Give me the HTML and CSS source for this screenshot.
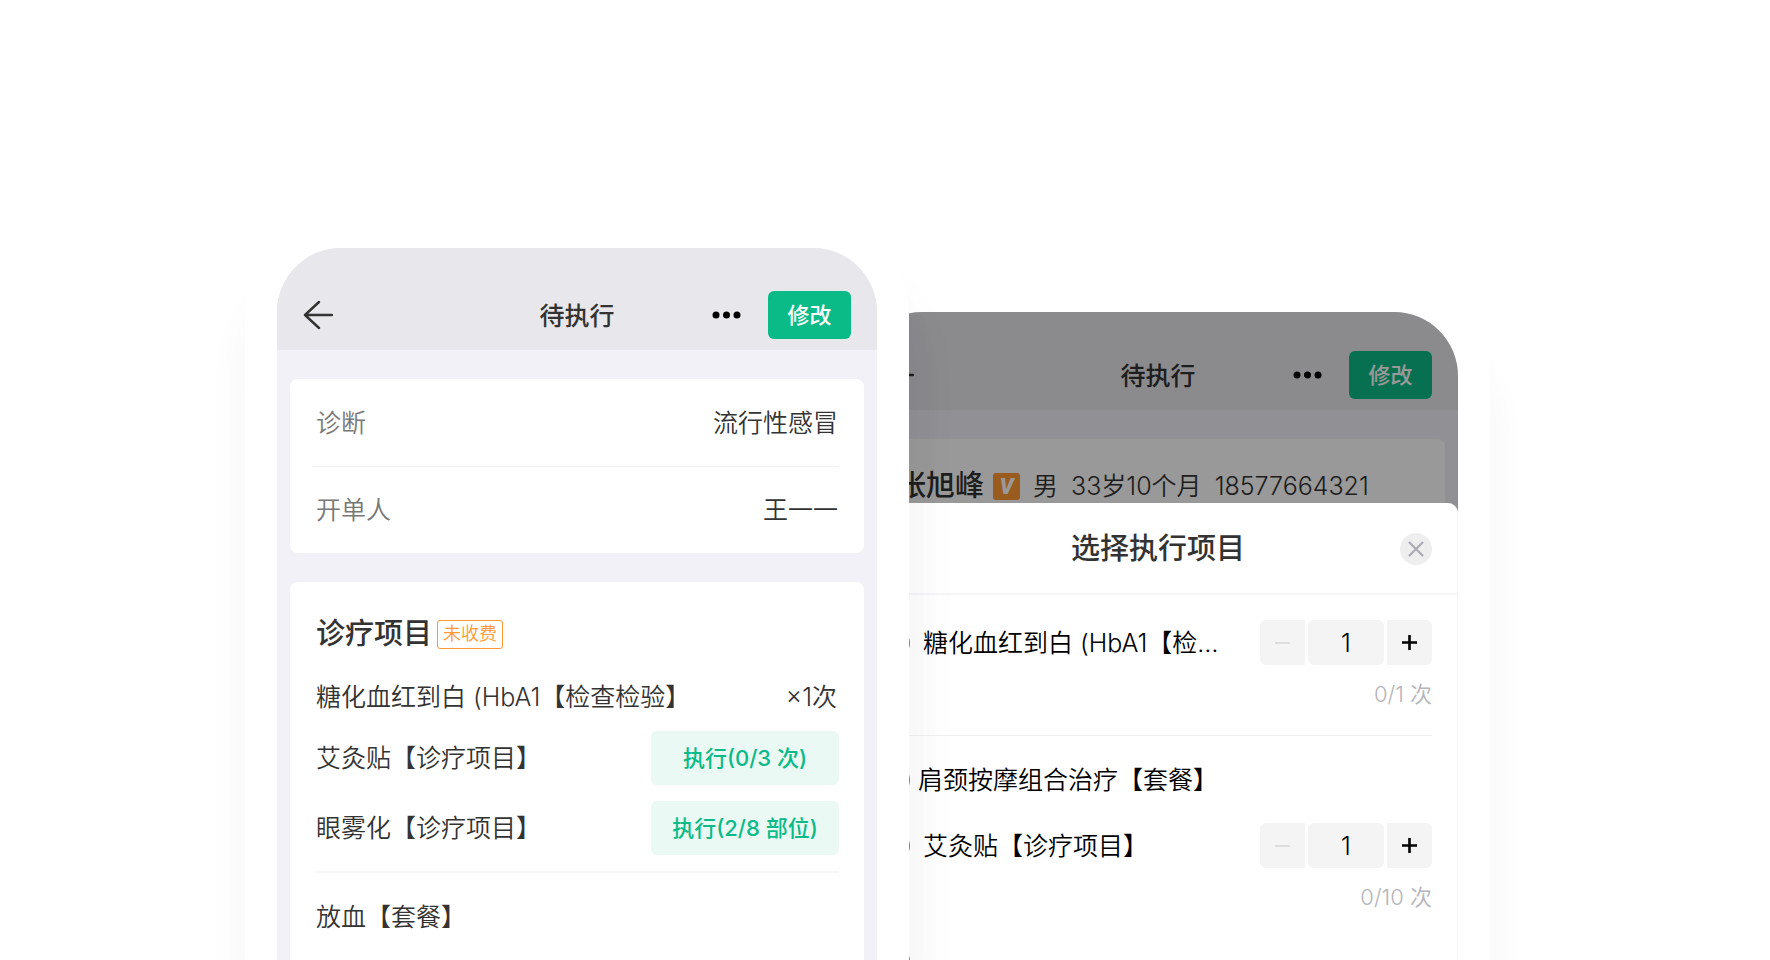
FILE: index.html
```html
<!DOCTYPE html>
<html lang="zh-CN">
<head>
  <meta charset="UTF-8">
  <meta name="viewport" content="width=device-width, initial-scale=1.0">
  <title>待执行</title>
  <link rel="stylesheet" href="styles.css">
</head>
<body>
  <main class="stage">
    <section class="phone phone-front">
      <div class="screen">
        <header class="nav">
          <button class="icon-btn" type="button" aria-label="返回">
            <svg width="30" height="30" viewBox="0 0 30 30" fill="none" stroke="#333" stroke-width="2.400" stroke-linecap="round" stroke-linejoin="round">
              <path d="M16 2 2 15l14 13M2 15h27"/>
            </svg>
          </button>
          <h1 class="nav-title">待执行</h1>
          <div class="nav-actions">
            <button class="icon-btn" type="button" aria-label="更多">
              <svg width="30" height="8" viewBox="0 0 30 8"><circle cx="4" cy="4" r="3.500"/><circle cx="14.500" cy="4" r="3.500"/><circle cx="25" cy="4" r="3.500"/></svg>
            </button>
            <button class="edit-btn" type="button">修改</button>
          </div>
        </header>

        <dl class="card info">
          <div class="info-row">
            <dt>诊断</dt>
            <dd>流行性感冒</dd>
          </div>
          <div class="info-row">
            <dt>开单人</dt>
            <dd>王一一</dd>
          </div>
        </dl>

        <div class="card items">
          <h2 class="items-title">诊疗项目 <span class="tag">未收费</span></h2>
          <div class="item">
            <span>糖化血红到白 (HbA1【检查检验】</span>
            <span class="item-count">×1次</span>
          </div>
          <div class="item">
            <span>艾灸贴【诊疗项目】</span>
            <button class="run-btn" type="button">执行(0/3 次)</button>
          </div>
          <div class="item">
            <span>眼雾化【诊疗项目】</span>
            <button class="run-btn" type="button">执行(2/8 部位)</button>
          </div>
          <div class="item item-package">
            <span>放血【套餐】</span>
          </div>
        </div>
      </div>
    </section>

    <section class="phone phone-back">
      <div class="screen">
        <header class="nav">
          <button class="icon-btn" type="button" aria-label="返回">
            <svg width="30" height="30" viewBox="0 0 30 30" fill="none" stroke="#333" stroke-width="2.400" stroke-linecap="round" stroke-linejoin="round">
              <path d="M16 2 2 15l14 13M2 15h27"/>
            </svg>
          </button>
          <h1 class="nav-title">待执行</h1>
          <div class="nav-actions">
            <button class="icon-btn" type="button" aria-label="更多">
              <svg width="30" height="8" viewBox="0 0 30 8"><circle cx="4" cy="4" r="3.500"/><circle cx="14.500" cy="4" r="3.500"/><circle cx="25" cy="4" r="3.500"/></svg>
            </button>
            <button class="edit-btn" type="button">修改</button>
          </div>
        </header>

        <div class="card patient">
          <strong class="patient-name">张旭峰</strong>
          <span class="vip">V</span>
          <span>男</span>
          <span>33岁10个月</span>
          <span>18577664321</span>
        </div>

        <div class="mask"></div>

        <div class="sheet">
          <div class="sheet-head">
            <h2 class="sheet-title">选择执行项目</h2>
            <button class="close-btn" type="button" aria-label="关闭">
              <svg width="16" height="16" viewBox="0 0 16 16" fill="none" stroke="#a9a9b2" stroke-width="2" stroke-linecap="round">
                <path d="M1.500 1.500l13 13M14.500 1.500l-13 13"/>
              </svg>
            </button>
          </div>

          <div class="pick-group">
            <div class="pick">
              <input type="checkbox" id="pick-hba1" class="check">
              <label for="pick-hba1">糖化血红到白 (HbA1【检…</label>
              <div class="stepper">
                <button type="button" class="minus" aria-label="减少" disabled>
                  <svg width="15" height="15" viewBox="0 0 15 15" stroke="currentColor" stroke-width="2"><path d="M0 8h15"/></svg>
                </button>
                <input type="text" value="1" aria-label="次数">
                <button type="button" class="plus" aria-label="增加">
                  <svg width="15" height="15" viewBox="0 0 15 15" stroke="currentColor" stroke-width="2.600"><path d="M0 7.500h15M7.500 0v15"/></svg>
                </button>
              </div>
            </div>
            <p class="pick-left">0/1 次</p>
          </div>

          <div class="pick-group">
            <div class="pick pick-parent">
              <input type="checkbox" id="pick-package" class="check">
              <label for="pick-package">肩颈按摩组合治疗【套餐】</label>
            </div>
            <div class="pick">
              <input type="checkbox" id="pick-moxa" class="check">
              <label for="pick-moxa">艾灸贴【诊疗项目】</label>
              <div class="stepper">
                <button type="button" class="minus" aria-label="减少" disabled>
                  <svg width="15" height="15" viewBox="0 0 15 15" stroke="currentColor" stroke-width="2"><path d="M0 8h15"/></svg>
                </button>
                <input type="text" value="1" aria-label="次数">
                <button type="button" class="plus" aria-label="增加">
                  <svg width="15" height="15" viewBox="0 0 15 15" stroke="currentColor" stroke-width="2.600"><path d="M0 7.500h15M7.500 0v15"/></svg>
                </button>
              </div>
            </div>
            <p class="pick-left">0/10 次</p>
            <div class="pick">
              <input type="checkbox" class="check" aria-label="选择项目">
            </div>
          </div>
        </div>
      </div>
    </section>
  </main>
</body>
</html>
```

FILE: styles.css
```css
* {
  box-sizing: border-box;
}
body {
  margin: 0;
  background: #fff;
  color: #333;
  font-family: Inter, "Noto Sans CJK SC", sans-serif;
  font-size: 25px;
  font-weight: 350;
  line-height: 36px;
}
h1, h2, p, dl, dd {
  margin: 0;
}
button, input {
  font-family: inherit;
  font-weight: inherit;
  line-height: inherit;
  border: none;
  padding: 0;
  margin: 0;
}
button {
  cursor: pointer;
}
svg {
  display: block;
}

/* two phones side by side, the front one overlaps the back one */
.stage {
  display: flex;
  justify-content: center;
  height: 100vh;
  padding-right: 35px;
  overflow: hidden;
}
.phone {
  flex: 0 0 664px;
  display: flex;
  padding: 32px 32px 0;
  border-radius: 96px 96px 0 0;
  background: #fff;
}
.phone-front {
  position: relative;
  z-index: 1;
  margin-top: 216px;
  box-shadow: 0 60px 24px 18px rgba(0, 0, 0, 0.018), 20px 50px 50px rgba(40, 50, 90, 0.02);
}
.phone-back {
  margin-top: 280px;
  margin-left: -83px;
  box-shadow: 0 60px 24px 18px rgba(0, 0, 0, 0.018);
}
.screen {
  position: relative;
  flex: 1;
  display: flex;
  flex-direction: column;
  min-width: 0;
  overflow: hidden;
  border-radius: 64px 64px 0 0;
  background: #f2f1f7;
}

/* top bar */
.nav {
  display: grid;
  grid-template-columns: 1fr auto 1fr;
  align-items: center;
  padding: 43px 26px 11px;
  background: #e8e7ec;
}
.phone-back .nav {
  padding-top: 39px;
}
.nav-title {
  padding-top: 2px;
  font-size: 25px;
  font-weight: 500;
}
.nav-actions {
  display: flex;
  align-items: center;
  justify-content: flex-end;
  gap: 26px;
}
.icon-btn {
  background: none;
  justify-self: start;
}
.edit-btn {
  width: 83px;
  height: 48px;
  border-radius: 6px;
  background: #0abb87;
  color: #fff;
  font-size: 22px;
  font-weight: 500;
}

.card {
  margin: 29px 13px 0;
  border-radius: 8px;
  background: #fff;
}

/* diagnosis */
.info-row {
  display: flex;
  justify-content: space-between;
  align-items: center;
  height: 87px;
  margin: 0 26px 0 22px;
  padding-left: 4px;
}
.info-row + .info-row {
  border-top: 1px solid #f0f0f2;
}
.info-row dt {
  color: #777;
}

/* treatment items */
.items {
  flex: 1;
  padding: 30px 25px 0 26px;
  border-radius: 8px 8px 0 0;
}
.items-title {
  display: flex;
  align-items: center;
  gap: 5px;
  height: 44px;
  margin-bottom: 23px;
  font-size: 29px;
  font-weight: 500;
}
.tag {
  height: 29px;
  padding: 0 5px;
  border: 1px solid #ff9933;
  border-radius: 3px;
  color: #ff9933;
  font-size: 18px;
  font-weight: 350;
  line-height: 26px;
}
.item {
  display: flex;
  justify-content: space-between;
  align-items: center;
  margin-bottom: 16px;
}
.item-count {
  padding-right: 2px;
}
.run-btn {
  width: 188px;
  height: 54px;
  border-radius: 6px;
  background: #eaf9f4;
  color: #0abb87;
  font-size: 22px;
  font-weight: 500;
}
.item-package {
  padding-top: 26px;
  border-top: 2px solid #f6f6f8;
}

/* patient line */
.patient {
  display: flex;
  align-items: center;
  gap: 13px;
  height: 94px;
  padding: 0 26px;
  white-space: nowrap;
}
.patient-name {
  margin-right: -4px;
  font-size: 29px;
  font-weight: 500;
}
.vip {
  width: 27px;
  height: 27px;
  border-radius: 3px;
  background: #ff9933;
  color: #fff;
  font-family: Roboto, sans-serif;
  font-size: 22px;
  font-style: italic;
  font-weight: 900;
  line-height: 27px;
  text-align: center;
}
.mask {
  position: absolute;
  inset: 0;
  background: rgba(0, 0, 0, 0.4);
}

/* bottom sheet */
.sheet {
  position: absolute;
  inset: 191px 0 0;
  border-right: 1px solid #f5f5f7;
  border-radius: 10px 10px 0 0;
  background: #fff;
  color: #000;
}
.sheet-head {
  display: flex;
  align-items: center;
  height: 92px;
  padding: 2px 25px 0 26px;
  border-bottom: 2px solid #f6f6f8;
}
.sheet-title {
  flex: 1;
  padding-left: 32px;
  color: #333;
  font-size: 29px;
  font-weight: 500;
  text-align: center;
}
.close-btn {
  display: grid;
  place-items: center;
  width: 32px;
  height: 32px;
  border-radius: 50%;
  background: #eee;
}
.pick-group {
  margin: 0 25px 0 26px;
  padding-top: 25px;
}
.pick-group + .pick-group {
  border-top: 1px solid #f0f0f2;
}
.pick {
  display: flex;
  align-items: center;
  gap: 13px;
  min-height: 45px;
}
.pick label {
  flex: 1;
  white-space: nowrap;
}
.pick-parent {
  gap: 8px;
  min-height: 38px;
  margin-bottom: 24px;
}
.check {
  appearance: none;
  flex: none;
  width: 26px;
  height: 26px;
  border: 2px solid #0abb87;
  border-radius: 50%;
}
.stepper {
  display: flex;
  gap: 3px;
}
.stepper button {
  display: grid;
  place-items: center;
  width: 45px;
  height: 45px;
  background: #f4f4f4;
}
.stepper input {
  width: 76px;
  height: 45px;
  border-radius: 6px;
  background: #f4f4f4;
  font-size: 25px;
  text-align: center;
}
.stepper .minus {
  border-radius: 6px 0 0 6px;
  color: #ddd;
}
.stepper .plus {
  border-radius: 0 6px 6px 0;
  color: #000;
}
.pick-left {
  margin: 11px 0 23px;
  color: #b4b4bb;
  font-size: 22px;
  text-align: right;
}
```
